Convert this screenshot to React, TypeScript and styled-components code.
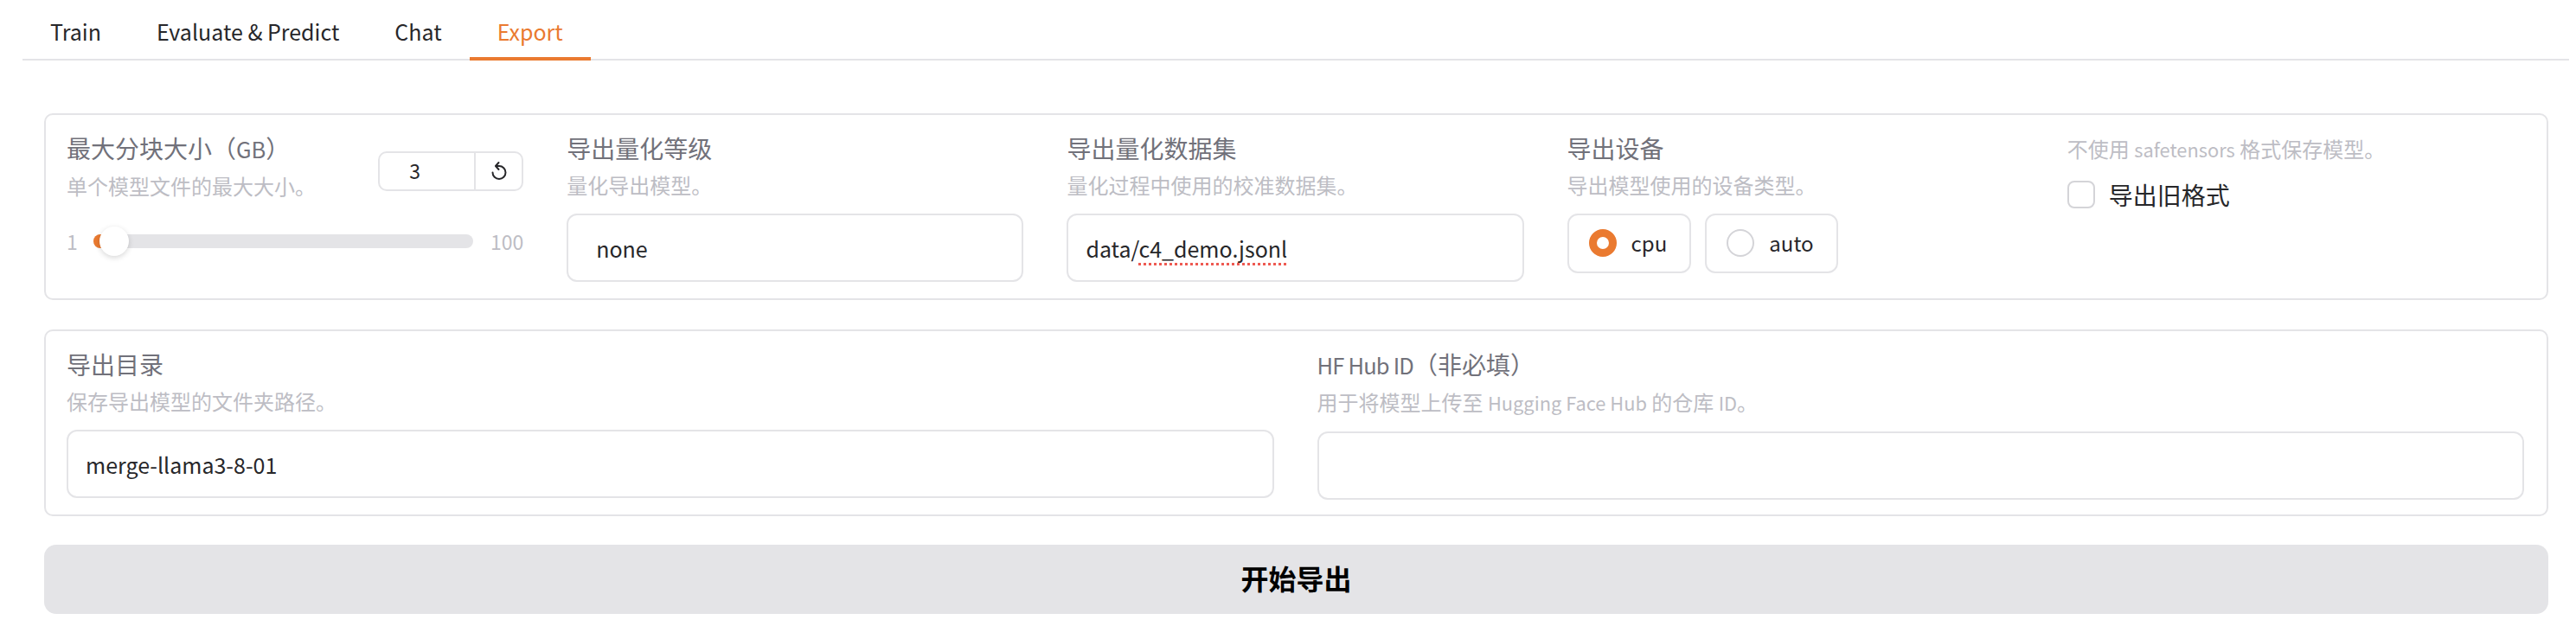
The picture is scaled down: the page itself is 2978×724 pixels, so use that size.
import styled, { createGlobalStyle } from "styled-components";

const Accent = "#ea7a30";
const Line = "#e4e4e7";
const Label = "#71717a";
const Info = "#bdbdc4";
const Ink = "#27272a";

const GlobalStyle = createGlobalStyle`
  html, body {
    margin: 0;
    padding: 0;
    background: #fff;
    font-family: "Noto Sans CJK SC", "Noto Sans", sans-serif;
    color: ${Ink};
  }
  * { box-sizing: border-box; }
`;

const Page = styled.div`
  width: 2978px;
  height: 724px;
  overflow: hidden;
  padding: 0 8px 0 26px;
`;

const TabBar = styled.div`
  display: flex;
  height: 70px;
  border-bottom: 2px solid ${Line};
`;

const Tab = styled.div<{ $active?: boolean }>`
  height: 70px;
  padding: 0 32px;
  font-size: 25px;
  line-height: 72px;
  color: ${(p) => (p.$active ? Accent : Ink)};
  border-bottom: ${(p) => (p.$active ? `4px solid ${Accent}` : "none")};
`;

const Content = styled.div`
  display: flex;
  flex-direction: column;
  margin: 61px 0 0 25px;
  width: 2895px;
`;

const Card = styled.div<{ $cols: number }>`
  display: grid;
  grid-template-columns: repeat(${(p) => p.$cols}, minmax(0, 1fr));
  column-gap: 50px;
  height: 216px;
  padding: 20px 26px 0 24px;
  margin-bottom: 34px;
  border: 2px solid ${Line};
  border-radius: 10px;
`;

const Col = styled.div`
  display: flex;
  flex-direction: column;
  min-width: 0;
`;

const FieldLabel = styled.div`
  font-size: 28px;
  line-height: 36px;
  color: ${Label};
`;

const FieldInfo = styled.div<{ $flush?: boolean }>`
  margin-top: ${(p) => (p.$flush ? "1px" : "7px")};
  font-size: 24px;
  line-height: 36px;
  color: ${Info};
`;

// Latin runs of the CJK font are drawn larger than the CJK glyphs next to them
const Latin = styled.span<{ $tight?: boolean }>`
  font-size: 0.91em;
  letter-spacing: ${(p) => (p.$tight ? "-0.8px" : "0")};
`;

const Field = styled.div<{ $indent?: boolean }>`
  height: 79px;
  margin-top: 15px;
  padding-left: ${(p) => (p.$indent ? "32px" : "20px")};
  font-size: 25px;
  line-height: 77px;
  color: ${Ink};
  border: 2px solid ${Line};
  border-radius: 12px;
`;

const Misspelled = styled.span`
  text-decoration: underline dotted #ee5a52 3px;
  text-underline-offset: 6px;
  text-decoration-skip-ink: none;
`;

const SliderHead = styled.div`
  display: flex;
  justify-content: space-between;
  align-items: flex-start;
`;

const NumberBox = styled.div`
  display: flex;
  width: 168px;
  height: 46px;
  margin-top: 22px;
  border: 2px solid ${Line};
  border-radius: 10px;
`;

const NumberValue = styled.div`
  flex: 1;
  padding-left: 34px;
  font-size: 23px;
  line-height: 41px;
  color: ${Ink};
  border-right: 2px solid ${Line};
`;

const ResetButton = styled.div`
  display: flex;
  align-items: center;
  justify-content: center;
  width: 53px;
  color: ${Ink};
`;

const SliderRow = styled.div`
  display: flex;
  align-items: center;
  height: 36px;
  margin-top: 28px;
  font-size: 23px;
  color: ${Info};
`;

const SliderEnd = styled.span<{ $width: number }>`
  width: ${(p) => p.$width}px;
`;

const Track = styled.div`
  position: relative;
  width: 440px;
  height: 16px;
  margin-right: 20px;
  border-radius: 8px;
  background: ${Line};
`;

const TrackFill = styled.div`
  width: 24px;
  height: 16px;
  border-radius: 8px 0 0 8px;
  background: ${Accent};
`;

const Thumb = styled.div`
  position: absolute;
  left: 7px;
  top: -9px;
  width: 34px;
  height: 34px;
  border-radius: 50%;
  background: #fff;
  box-shadow: 0 2px 6px rgba(0, 0, 0, 0.16);
`;

const RadioGroup = styled.div`
  display: flex;
  gap: 16px;
  margin-top: 15px;
`;

const RadioOption = styled.div`
  display: flex;
  align-items: center;
  gap: 17px;
  height: 69px;
  padding: 0 26px 2px 23px;
  font-size: 24px;
  color: ${Ink};
  border: 2px solid ${Line};
  border-radius: 12px;
`;

const RadioDot = styled.span<{ $checked?: boolean }>`
  width: 32px;
  height: 32px;
  border-radius: 50%;
  border: ${(p) => (p.$checked ? `9px solid ${Accent}` : "2px solid #d4d4d8")};
  background: #fff;
`;

const CheckRow = styled.div`
  display: flex;
  align-items: center;
  gap: 16px;
  margin-top: 16px;
  font-size: 28px;
  line-height: 36px;
  color: ${Ink};
`;

const CheckBox = styled.span`
  width: 32px;
  height: 32px;
  border: 2px solid #d4d4d8;
  border-radius: 8px;
`;

const SubmitButton = styled.div`
  height: 80px;
  margin-top: -1px;
  font-size: 32px;
  font-weight: 700;
  line-height: 76px;
  text-align: center;
  color: #000;
  background: ${Line};
  border-radius: 14px;
`;

function ResetIcon() {
  return (
    <svg width="24" height="24" viewBox="0 0 24 24" fill="none" stroke="currentColor" strokeWidth="2" strokeLinecap="round" strokeLinejoin="round">
      <path d="M8.5 6h3.5a7.5 7.5 0 1 1-7.5 7.5" />
      <path d="M11.5 2 8 6l3.5 4" />
    </svg>
  );
}

export default function App() {
  return (
    <Page>
      <GlobalStyle />
      <TabBar>
        <Tab>Train</Tab>
        <Tab>Evaluate &amp; Predict</Tab>
        <Tab>Chat</Tab>
        <Tab $active>Export</Tab>
      </TabBar>
      <Content>
        <Card $cols={5}>
          <Col>
            <SliderHead>
              <div>
                <FieldLabel>
                  最大分块大小（<Latin>GB</Latin>）
                </FieldLabel>
                <FieldInfo>单个模型文件的最大大小。</FieldInfo>
              </div>
              <NumberBox>
                <NumberValue>3</NumberValue>
                <ResetButton>
                  <ResetIcon />
                </ResetButton>
              </NumberBox>
            </SliderHead>
            <SliderRow>
              <SliderEnd $width={31}>1</SliderEnd>
              <Track>
                <TrackFill />
                <Thumb />
              </Track>
              <span>100</span>
            </SliderRow>
          </Col>
          <Col>
            <FieldLabel>导出量化等级</FieldLabel>
            <FieldInfo>量化导出模型。</FieldInfo>
            <Field $indent>none</Field>
          </Col>
          <Col>
            <FieldLabel>导出量化数据集</FieldLabel>
            <FieldInfo>量化过程中使用的校准数据集。</FieldInfo>
            <Field>
              data/<Misspelled>c4_demo.jsonl</Misspelled>
            </Field>
          </Col>
          <Col>
            <FieldLabel>导出设备</FieldLabel>
            <FieldInfo>导出模型使用的设备类型。</FieldInfo>
            <RadioGroup>
              <RadioOption>
                <RadioDot $checked />
                cpu
              </RadioOption>
              <RadioOption>
                <RadioDot />
                auto
              </RadioOption>
            </RadioGroup>
          </Col>
          <Col>
            <FieldInfo $flush>
              不使用 <Latin>safetensors</Latin> 格式保存模型。
            </FieldInfo>
            <CheckRow>
              <CheckBox />
              导出旧格式
            </CheckRow>
          </Col>
        </Card>
        <Card $cols={2}>
          <Col>
            <FieldLabel>导出目录</FieldLabel>
            <FieldInfo>保存导出模型的文件夹路径。</FieldInfo>
            <Field>merge-llama3-8-01</Field>
          </Col>
          <Col>
            <FieldLabel>
              <Latin $tight>HF Hub ID</Latin>（非必填）
            </FieldLabel>
            <FieldInfo>
              用于将模型上传至 <Latin>Hugging Face Hub</Latin> 的仓库 <Latin>ID</Latin>。
            </FieldInfo>
            <Field />
          </Col>
        </Card>
        <SubmitButton>开始导出</SubmitButton>
      </Content>
    </Page>
  );
}
